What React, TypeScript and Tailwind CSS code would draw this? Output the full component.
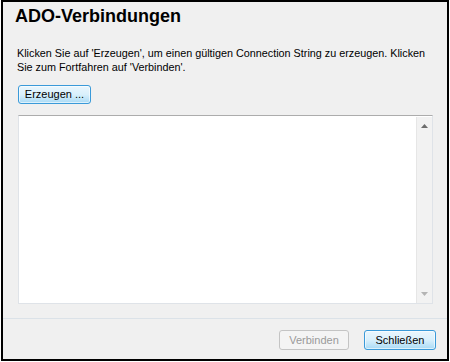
const font = { fontFamily: '"Liberation Sans", Arial, sans-serif' };

function BlueButton({ label, className = "" }: { label: string; className?: string }) {
  return (
    <button
      className={
        "flex items-center justify-center rounded-[3px] border border-[#3a9ad9] bg-gradient-to-b from-[#eaf6fd] via-[#d9f0fc] to-[#a9daf5] text-[11px] text-black shadow-[inset_0_0_0_1px_rgba(255,255,255,0.6)] " +
        className
      }
    >
      {label}
    </button>
  );
}

export default function App() {
  return (
    <div className="h-[362px] w-[450px] bg-white" style={font}>
      <div className="ml-[1px] flex h-[361px] w-[448px] flex-col border-2 border-black bg-[#f0f0f0]">
        <h1 className="ml-[12px] mt-[3px] text-[18px] font-bold leading-[22px] text-black">
          ADO-Verbindungen
        </h1>
        <p className="ml-[14px] mt-[19px] w-[425px] whitespace-nowrap text-[10.8px] leading-[14px] text-black">
          Klicken Sie auf 'Erzeugen', um einen gültigen Connection String zu erzeugen. Klicken
          <br />
          Sie zum Fortfahren auf 'Verbinden'.
        </p>
        <BlueButton label="Erzeugen ..." className="ml-[15px] mt-[11px] h-[19px] w-[73px]" />
        <div className="ml-[15px] mt-[11px] flex h-[189px] w-[415px] border border-[#dfe3e8] border-t-[#acacac] bg-white">
          <div className="flex-1" />
          <div className="mt-[1px] flex w-[16px] flex-col items-center justify-between border-l border-[#e6e6e6] bg-[#f2f2f2] pb-[7px] pt-[7px]">
            <svg width="7" height="4" viewBox="0 0 7 4">
              <path d="M3.5 0 L7 4 L0 4 Z" fill="#6d6d6d" />
            </svg>
            <svg width="7" height="4" viewBox="0 0 7 4">
              <path d="M0 0 L7 0 L3.5 4 Z" fill="#b4b4b4" />
            </svg>
          </div>
        </div>
        <div className="mt-[14px] h-px bg-[#dbe2e8]" />
        <div className="mt-[11px] flex justify-end gap-[15px] pr-[11px]">
          <button className="flex h-[20px] w-[70px] items-center justify-center rounded-[3px] border border-[#c4c4c4] bg-[#f4f4f4] text-[11px] text-[#9a9a9a]">
            Verbinden
          </button>
          <BlueButton label="Schließen" className="h-[20px] w-[72px]" />
        </div>
      </div>
    </div>
  );
}
